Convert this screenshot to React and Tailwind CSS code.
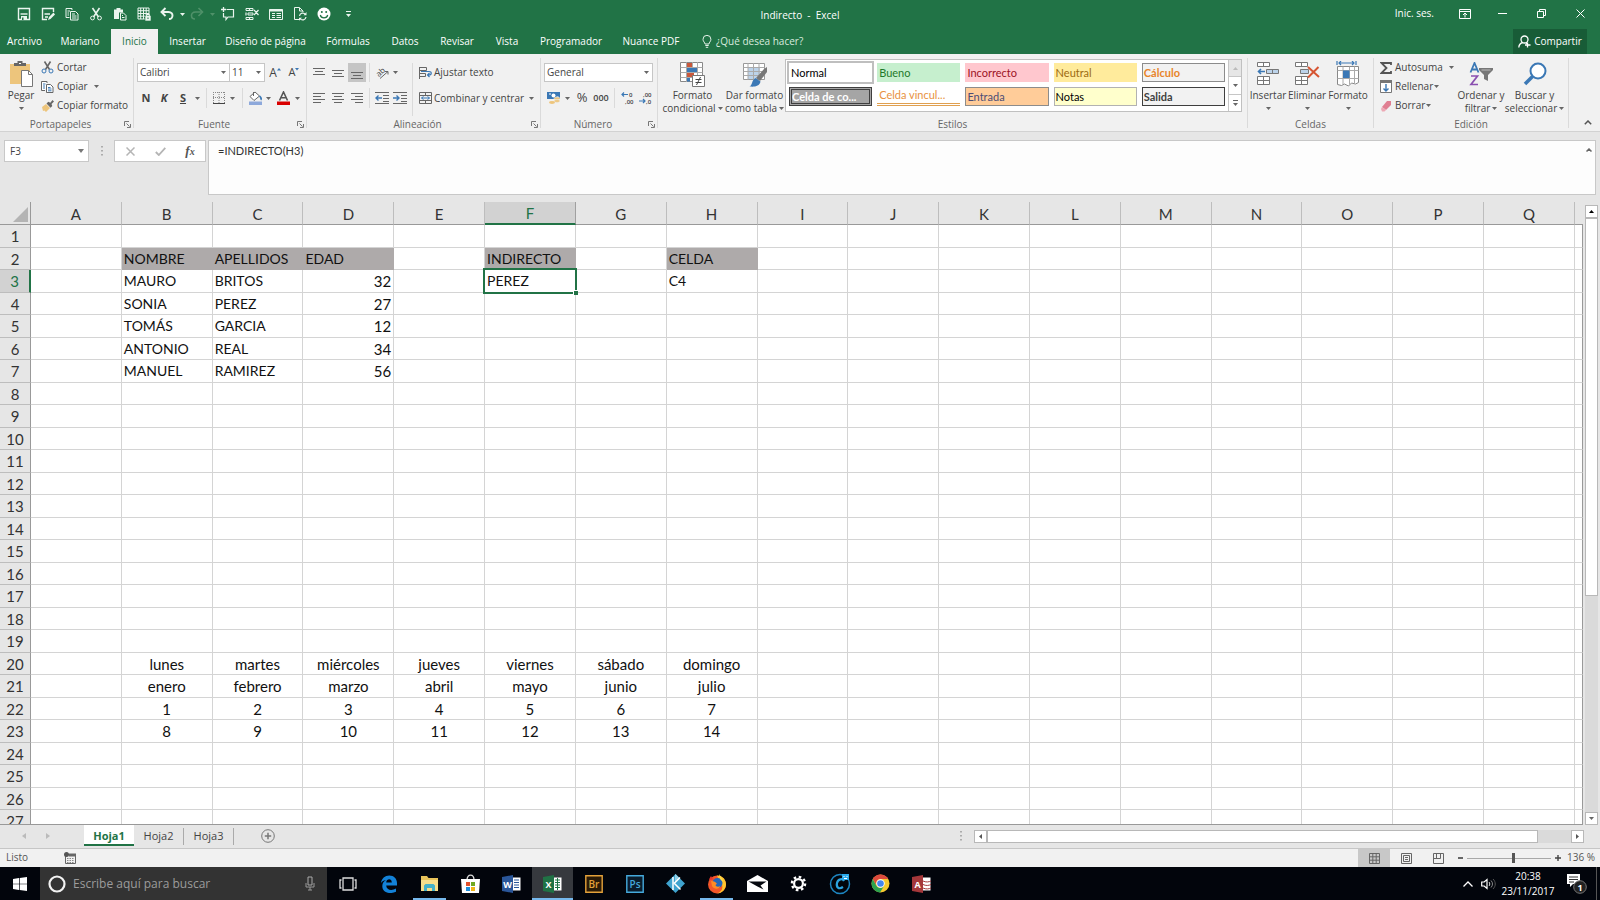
import React from "react";

const Svg = ({ w = 14, h = 14, children, className = "" }) => (
  <svg width={w} height={h} viewBox={`0 0 ${w} ${h}`} fill="none" aria-hidden="true" className={`shrink-0 ${className}`}>
    {children}
  </svg>
);

const Arrow = ({ className = "text-[#666]" }) => (
  <svg width="5" height="3" viewBox="0 0 5 3" aria-hidden="true" className={`shrink-0 ${className}`}>
    <path d="M0 0h5L2.500 3z" fill="currentColor" />
  </svg>
);

const Tool = ({ label, className, children }) => (
  <button type="button" aria-label={label} className={`flex shrink-0 items-center justify-center ${className}`}>
    {children}
  </button>
);

const VSep = ({ className = "" }) => <span className={`w-px shrink-0 self-stretch bg-[#dadada] ${className}`} />;

const Launcher = ({ label }) => (
  <button type="button" aria-label={label} className="flex h-4 w-3 items-center justify-center">
    <Svg w={7} h={7}>
      <path d="M.5 5V.5H5M2.500 2.500l3 3M6.500 3v3.500H3" stroke="#777" />
    </Svg>
  </button>
);

const Group = ({ label, launcher, className, children }) => (
  <section aria-label={label} className={`flex h-[70px] flex-col border-r border-[#dadada] ${className}`}>
    <div className="flex h-[58px]">{children}</div>
    <div className="flex h-3 items-start leading-4 text-[#666]">
      <span className="flex-1 text-center">{label}</span>
      {launcher && <Launcher label={`Opciones de ${label}`} />}
    </div>
  </section>
);

const BigButton = ({ icon, lines, className, arrow = "inline" }) => (
  <button type="button" className={`flex shrink-0 flex-col items-center pt-[2px] ${className}`}>
    <span className="flex h-[29px] items-center pb-px">{icon}</span>
    {lines.map((l, i) => (
      <span key={l} className="flex h-[13px] items-center gap-[2px] leading-[13px] whitespace-nowrap">
        {l}
        {arrow === "inline" && i === lines.length - 1 && <Arrow />}
      </span>
    ))}
    {arrow === "below" && (
      <span className="flex h-[13px] items-center">
        <Arrow />
      </span>
    )}
  </button>
);

const RowButton = ({ icon, text, arrowGap }) => (
  <button type="button" className="flex h-[19px] items-center whitespace-nowrap">
    <span className="mr-[3px] flex w-[13px] justify-center">{icon}</span>
    {text}
    {arrowGap && <Arrow className={`text-[#666] ${arrowGap}`} />}
  </button>
);

const Combo = ({ label, value, className }) => (
  <div className={`flex h-[19px] items-center border border-[#c6c6c6] bg-white pr-[3px] ${className}`}>
    <select aria-label={label} defaultValue={value} className="min-w-0 flex-1 appearance-none bg-transparent pl-[2px] outline-none">
      <option>{value}</option>
    </select>
    <Arrow />
  </div>
);

/* ---------- Quick access toolbar ---------- */

const W = "#eaf5ee";

const quick = [
  ["Guardar", "w-6", <Svg><path d="M1.500 1.500h11v11h-11z" stroke={W} strokeWidth="1.400" /><path d="M3.500 7h7" stroke={W} strokeWidth="1.400" /><path d="M4 9h6v4H4z" fill={W} /><path d="M5 10.500h1.500V13H5z" fill="#217346" /></Svg>],
  ["Guardar como", "w-6", <Svg><path d="M12.500 5V1.500h-11v11H6" stroke={W} strokeWidth="1.400" /><path d="M3.500 7H9M4 10h3" stroke={W} strokeWidth="1.400" /><path d="M7 13l1-3 4.500-4.500 1.500 2L9.500 12z" fill={W} /></Svg>],
  ["Copiar", "w-6", <Svg><path d="M7 3V1.500H1v9h3.500M5.500 4.500h5l2.500 2.500v6h-7.500z" stroke={W} /><path d="M2.500 4H5M2.500 6H4M2.500 8H4M7 7h3M7 9h4.500M7 11h4.500" stroke={W} /></Svg>],
  ["Cortar", "w-6", <Svg><path d="M3.500 1l6 9M10.500 1l-6 9" stroke={W} strokeWidth="1.600" /><circle cx="3.500" cy="11" r="1.900" stroke={W} /><circle cx="10.500" cy="11" r="1.900" stroke={W} /></Svg>],
  ["Pegar", "w-6", <Svg><path d="M1 2.500h2.500V1h4v1.500H10v3H6V12H1z" fill={W} /><path d="M7.500 6h3l2.500 2.500V13H7.500z" stroke={W} /><path d="M9 8.500h1M9 10.500h2.500" stroke={W} /></Svg>],
  ["Proteger hoja", "w-6", <Svg><path d="M1 1h11v11H1zM1 3.700h11M1 6.500h11M1 9.200h11M3.700 1v11M6.500 1v11M9.200 1v11" stroke={W} /><path d="M8 8.500h6V14H8z" fill={W} stroke="#217346" strokeWidth=".6" /><path d="M9.700 9V7.500h2.600V9" stroke={W} /><path d="M11 10.500v1.500" stroke="#217346" /></Svg>],
  ["Deshacer", "w-[22px]", <Svg><path d="M2 5h6.500c3 0 4 2 4 3.500s-1 3.500-3.500 3.500" stroke={W} strokeWidth="1.900" /><path d="M5.500 1L1.500 5l4 4" stroke={W} strokeWidth="1.900" /></Svg>],
  ["Opciones de deshacer", "w-2", <Arrow className="text-[#eaf5ee]" />],
  ["Rehacer", "w-[22px]", <Svg><path d="M12 5H5.500c-3 0-4 2-4 3.500S2.500 12 5 12" stroke="#4f9169" strokeWidth="1.600" /><path d="M8.500 1l4 4-4 4" stroke="#4f9169" strokeWidth="1.600" /></Svg>],
  ["Opciones de rehacer", "w-2", <Arrow className="text-[#4f9169]" />],
  ["Nuevo comentario", "w-6", <Svg><path d="M5.500 2.500h7v7.500H7l-2 2.500V10H2.500V6" stroke={W} strokeWidth="1.200" /><path d="M2.500 0v5M0 2.500h5" stroke={W} strokeWidth="1.300" /></Svg>],
  ["Eliminar filas", "w-6", <Svg><path d="M1 1.500h7v2H1zM3 6h5v2H3zM1 10.500h7v2H1z" stroke={W} /><path d="M4.500 1.500v2M4.500 10.500v2M1 5.500v3M9 3l4.500 5M13.500 3L9 8" stroke={W} strokeWidth="1.200" /></Svg>],
  ["Formulario", "w-6", <Svg><path d="M.5 2.500h13v10H.5z" stroke={W} /><path d="M.5 2.500h13v2H.5z" fill={W} /><path d="M3 6.500h3M3 8.500h3M3 10.500h3M7.500 6.500H12M7.500 8.500H12M7.500 10.500H12" stroke={W} /></Svg>],
  ["Actualizar", "w-6", <Svg><path d="M6 12.500H1.500v-12h5L10 4v1" stroke={W} /><path d="M6.500 1v3H10" stroke={W} /><path d="M6.500 9a3.300 3.300 0 016-1.500M13 10a3.300 3.300 0 01-6 1.500" stroke={W} strokeWidth="1.200" /><path d="M13.500 5v3.300h-3zM6 13.800v-3h3z" fill={W} /></Svg>],
  ["Emoticono", "w-6", <Svg><circle cx="7" cy="7" r="6.500" fill="#fff" /><circle cx="4.800" cy="5" r="1" fill="#217346" /><circle cx="9.200" cy="5" r="1" fill="#217346" /><path d="M3.300 8c.8 3.700 6.600 3.700 7.400 0" stroke="#217346" strokeWidth="1.200" /></Svg>],
  ["Personalizar barra", "w-6", <Svg w={5} h={6}><path d="M0 .5h5" stroke={W} /><path d="M0 3h5L2.500 6z" fill={W} /></Svg>],
];

const TitleBar = () => (
  <header className="grid h-[29px] grid-cols-[1fr_auto_1fr] items-center text-white">
    <div className="flex h-full items-center pb-px pl-3">
      {quick.map(([label, cls, icon]) => (
        <Tool key={label} label={label} className={`h-full ${cls}`}>{icon}</Tool>
      ))}
    </div>
    <h1 className="leading-[26px] whitespace-pre">Indirecto  -  Excel</h1>
    <div className="flex h-full items-center justify-end pb-[2px]">
      <button type="button" className="mr-3">Inic. ses.</button>
      <Tool label="Opciones de la cinta" className="w-[37px]">
        <Svg w={12} h={10}><path d="M.5.5h11v9H.5zM.5 2.500h11" stroke="#fff" /><path d="M6 8.500V4M4 6l2-2 2 2" stroke="#fff" /></Svg>
      </Tool>
      <Tool label="Minimizar" className="w-[39px]"><Svg w={9} h={2}><path d="M0 .5h9" stroke="#fff" /></Svg></Tool>
      <Tool label="Restaurar" className="w-[39px]"><Svg w={9} h={9}><path d="M.5 2.500h6v6h-6zM2.500 2.500v-2h6v6h-2" stroke="#fff" /></Svg></Tool>
      <Tool label="Cerrar" className="w-[39px]"><Svg w={9} h={9}><path d="M.5.5l8 8M8.500.5l-8 8" stroke="#fff" /></Svg></Tool>
    </div>
  </header>
);

const tabs = [
  ["Archivo", "w-[49px]"],
  ["Mariano", "w-[62px]"],
  ["Inicio", "w-[47px]"],
  ["Insertar", "w-[59px]"],
  ["Diseño de página", "w-[97px]"],
  ["Fórmulas", "w-[68px]"],
  ["Datos", "w-[46px]"],
  ["Revisar", "w-[58px]"],
  ["Vista", "w-[42px]"],
  ["Programador", "w-[86px]"],
  ["Nuance PDF", "w-[74px]"],
];

const TabBar = () => (
  <nav aria-label="Cinta de opciones" className="flex h-[25px] text-white">
    {tabs.map(([t, w]) => (
      <button key={t} type="button" className={`shrink-0 whitespace-nowrap ${w} ${t === "Inicio" ? "bg-[#f1f1f1] text-[#217346]" : ""}`}>{t}</button>
    ))}
    <button type="button" className="ml-[14px] flex items-center gap-1 whitespace-nowrap text-[#d9eadf]">
      <Svg w={10} h={13}><path d="M3 9C3 7.500 1 6.500 1 4.300a3.900 3.900 0 017.900 0C8.900 6.500 7 7.500 7 9zM3.300 10.500h3.400M3.800 12.300h2.400" stroke="#e5f1e9" /></Svg>
      ¿Qué desea hacer?
    </button>
    <button type="button" className="mr-[13px] ml-auto flex w-[74px] items-center justify-center gap-[3px] bg-[#185c37] whitespace-nowrap">
      <Svg w={13} h={13}><circle cx="6.500" cy="4.500" r="3.500" stroke="#fff" strokeWidth="1.300" /><path d="M.8 12.500c.2-3 2-4.500 4-5M8 8l1.500 1" stroke="#fff" strokeWidth="1.300" /><path d="M9.500 7.500v5M7 10h5.500" stroke="#fff" strokeWidth="1.300" /></Svg>
      Compartir
    </button>
  </nav>
);

/* ---------- Ribbon ---------- */

const G = "#666";
const B = "#3b78b5";

const Lines = ({ rows }) => (
  <Svg w={12} h={12}>
    {rows.map(([x, y, len]) => <path key={y} d={`M${x} ${y}.5h${len}`} stroke={G} />)}
  </Svg>
);

const styles = [
  ["Normal", "bg-white pl-[2px] text-black outline-2 outline-[#bfbfbf]"],
  ["Bueno", "bg-[#c6efce] pl-[2px] text-[#1f7a2b]"],
  ["Incorrecto", "bg-[#ffc7ce] pl-[2px] text-[#9c1225]"],
  ["Neutral", "bg-[#ffeb9c] pl-[2px] text-[#9c6a10]"],
  ["Cálculo", "border border-[#8c8c8c] bg-[#f2f2f2] pl-px font-bold text-[#e8842a]"],
  ["Celda de co...", "border-3 border-double border-[#3f3f3f] bg-[#a5a5a5] font-bold text-white"],
  ["Celda vincul...", "border-b-3 border-double border-[#e0a050] bg-white pl-[2px] text-[#e8923f]"],
  ["Entrada", "border border-[#8c8c8c] bg-[#ffcc99] pl-px text-[#4c4c76]"],
  ["Notas", "border border-[#b2b2b2] bg-[#ffffcc] pl-px text-black"],
  ["Salida", "border border-[#3f3f3f] bg-[#f2f2f2] pl-px font-bold text-[#3f3f3f]"],
];

const Ribbon = () => (
  <div className="flex h-[78px] border-b border-[#d2d2d2] bg-[#f1f1f1] pt-1 text-[#444]">
    <Group label="Portapapeles" launcher className="w-[134px] shrink-0">
      <BigButton
        className="ml-[5px] w-8"
        arrow="below"
        lines={["Pegar"]}
        icon={<Svg w={24} h={26}><path d="M1 3h20v20H1z" fill="#edc57c" /><path d="M5 5V2h3.500V0h5v2H17v3z" fill="#666" /><path d="M10 2h2v1h-2z" fill="#fff" /><path d="M12.500 9.500h7l4 4v12h-11z" fill="#fff" stroke="#777" /><path d="M19.500 9.500v4h4" stroke="#777" /></Svg>}
      />
      <div className="ml-1 flex flex-col items-start">
        <RowButton text="Cortar" icon={<Svg w={13} h={13}><path d="M3.500.5l5 8M9.500.5l-5 8" stroke={G} strokeWidth="1.600" /><circle cx="3" cy="10" r="2" stroke={B} /><circle cx="10" cy="10" r="2" stroke={B} /></Svg>} />
        <RowButton text="Copiar" arrowGap="ml-[6px]" icon={<Svg w={13} h={13}><path d="M6 3V1.500H.5v9H4M5.500 4.500h4l2.500 2.500v5.500H5.500z" fill="#fff" stroke={G} /><path d="M2 4h2.500M2 6h2M2 8h2M7 7.500h2.500M7 9h3.500M7 10.800h3.500" stroke={B} /></Svg>} />
        <RowButton text="Copiar formato" icon={<Svg w={13} h={13}><path d="M1 8l4-3 4 4-4 4-1.500-1.500L2 12z" fill="#edc57c" /><path d="M5.500 4.500l1.800-1.800 2 1L11.500 1 13 2.500 10.500 5l.8 2-1.800 1.800z" fill="#666" /></Svg>} />
      </div>
    </Group>

    <Group label="Fuente" launcher className="w-[173px] shrink-0">
      <div className="flex flex-col pt-[5px] pl-[3px]">
        <div className="flex h-[19px] items-center">
          <Combo label="Fuente" value="Calibri" className="w-[93px]" />
          <Combo label="Tamaño de fuente" value="11" className="w-[35px] border-l-0" />
          <Tool label="Aumentar tamaño" className="w-[20px]"><span className="text-xs">A</span><Svg w={4} h={10}><path d="M0 2.500L2 0l2 2.500z" fill={B} /></Svg></Tool>
          <Tool label="Reducir tamaño" className="w-[18px]"><span className="text-[11px]">A</span><Svg w={4} h={10}><path d="M0 0h4L2 2.500z" fill={B} /></Svg></Tool>
        </div>
        <div className="mt-[6px] flex h-[20px] items-center">
          <Tool label="Negrita" className="w-[18px]"><b className="text-[11px]">N</b></Tool>
          <Tool label="Cursiva" className="w-[18px]"><b className="text-[11px] italic">K</b></Tool>
          <Tool label="Subrayado" className="w-[20px]"><b className="text-[11px] underline">S</b></Tool>
          <Tool label="Tipos de subrayado" className="w-[9px]"><Arrow /></Tool>
          <VSep className="mx-1" />
          <Tool label="Bordes" className="w-4"><Svg w={12} h={12}><path d="M.5 0v11M6 0v11M11.500 0v11M0 .5h12M0 5.500h12" stroke="#888" strokeDasharray="1 1" /><path d="M0 11.500h12" stroke="#444" /></Svg></Tool>
          <Tool label="Más bordes" className="w-[11px]"><Arrow /></Tool>
          <VSep className="mx-1" />
          <Tool label="Color de relleno" className="w-4"><Svg w={15} h={14}><path d="M5.500 1v4M2 5.500L7 1l4.500 4L6 9.500z" fill="#fff" stroke={G} /><path d="M12 4.500c2.500 2 2.500 4 1.200 5-1.200-.5-.5-2.500-2.200-4z" fill={B} /><path d="M1 10.500h13V14H1z" fill="#8ea9db" /></Svg></Tool>
          <Tool label="Más colores de relleno" className="w-[10px]"><Arrow /></Tool>
          <Tool label="Color de fuente" className="w-5"><Svg w={13} h={14}><path d="M2.500 9.500L6.500 1l4 8.500M4 6.800h5" stroke="#555" strokeWidth="1.600" /><path d="M0 10.500h13V14H0z" fill="#d90000" /></Svg></Tool>
          <Tool label="Más colores de fuente" className="w-[9px]"><Arrow /></Tool>
        </div>
      </div>
    </Group>

    <Group label="Alineación" launcher className="w-[234px] shrink-0">
      <div className="flex flex-col gap-[6px] pt-[5px] pl-[3px]">
        <div className="flex h-[19px] items-center gap-px">
          <Tool label="Alinear arriba" className="h-full w-[18px]"><Lines rows={[[0, 1, 12], [2, 4, 8], [0, 7, 12]]} /></Tool>
          <Tool label="Alinear al medio" className="h-full w-[18px]"><Lines rows={[[0, 3, 12], [2, 6, 8], [0, 9, 12]]} /></Tool>
          <Tool label="Alinear abajo" className="h-full w-[18px] bg-[#c5c5c5]"><Lines rows={[[0, 5, 12], [2, 8, 8], [0, 11, 12]]} /></Tool>
          <VSep className="ml-[2px]" />
          <Tool label="Orientación" className="ml-[3px] w-4"><Svg w={16} h={18}><text x="2" y="12" fontSize="8" fill="#444" transform="rotate(-40 5 9)">ab</text><path d="M6 14.500l8-7M11 7.500h3v3" stroke="#666" /></Svg></Tool>
          <Tool label="Más orientaciones" className="w-2"><Arrow /></Tool>
        </div>
        <div className="flex h-5 items-center gap-px">
          <Tool label="Alinear a la izquierda" className="w-[18px]"><Lines rows={[[0, 1, 12], [0, 4, 8], [0, 7, 12], [0, 10, 8]]} /></Tool>
          <Tool label="Centrar" className="w-[18px]"><Lines rows={[[0, 1, 12], [2, 4, 8], [0, 7, 12], [2, 10, 8]]} /></Tool>
          <Tool label="Alinear a la derecha" className="w-[18px]"><Lines rows={[[0, 1, 12], [4, 4, 8], [0, 7, 12], [4, 10, 8]]} /></Tool>
          <VSep className="ml-[2px]" />
          <Tool label="Disminuir sangría" className="ml-[3px] w-4"><Svg w={14} h={12}><path d="M0 .5h14M8 3.500h6M8 6.500h6M8 9.500h6M0 11.500h14" stroke={G} /><path d="M7 6H1M3.500 3.500L1 6l2.500 2.500" stroke={B} strokeWidth="1.400" /></Svg></Tool>
          <Tool label="Aumentar sangría" className="w-[18px]"><Svg w={14} h={12}><path d="M0 .5h14M8 3.500h6M8 6.500h6M8 9.500h6M0 11.500h14" stroke={G} /><path d="M0 6h6M3.500 3.500L6 6 3.500 8.500" stroke={B} strokeWidth="1.400" /></Svg></Tool>
        </div>
      </div>
      <VSep className="mt-[5px] ml-[3px]" />
      <div className="flex flex-col gap-[6px] pt-[5px] pl-[6px]">
        <button type="button" className="flex h-[19px] items-center gap-px whitespace-nowrap">
          <Svg><path d="M.5 1v12M.5 1.500h7v3h-7M.5 7.500h6v3h-6" stroke={G} /><path d="M2 5.500h8c3 0 3 3.500 0 3.500H9M10.500 7L8.500 9l2 2" stroke={B} strokeWidth="1.200" /></Svg>
          Ajustar texto
        </button>
        <button type="button" className="flex h-5 items-center gap-px whitespace-nowrap">
          <Svg><path d="M.5 1.500h12v11H.5zM.5 4.500h12M.5 9.500h12M6.500 1.500v3M6.500 9.500v3" stroke={G} /><path d="M2.500 7h8M4.500 5.500L2.500 7l2 1.500M8.500 5.500l2 1.500-2 1.500" stroke={B} /></Svg>
          Combinar y centrar
          <Arrow className="ml-1 text-[#666]" />
        </button>
      </div>
    </Group>

    <Group label="Número" launcher className="w-[117px] shrink-0">
      <div className="flex flex-col gap-[6px] pt-[5px] pl-[3px]">
        <Combo label="Formato de número" value="General" className="w-[109px]" />
        <div className="flex h-5 items-center">
          <Tool label="Formato de moneda" className="ml-px w-[18px]"><Svg><path d="M0 1h13v7H0z" fill={B} /><path d="M2 2.500h2v1H2zM9.500 5.500h2v1h-2z" fill="#fff" /><circle cx="6.500" cy="4.500" r="2" fill="#fff" /><ellipse cx="10" cy="7.500" rx="3" ry="1.400" fill="#edc57c" stroke="#f1f1f1" strokeWidth=".5" /><ellipse cx="10" cy="10" rx="3" ry="1.400" fill="#edc57c" stroke="#f1f1f1" strokeWidth=".5" /><ellipse cx="5" cy="11.500" rx="3" ry="1.400" fill="#edc57c" /></Svg></Tool>
          <Tool label="Más monedas" className="w-[9px]"><Arrow /></Tool>
          <Tool label="Estilo porcentual" className="w-5 text-[13px]">%</Tool>
          <Tool label="Estilo millares" className="w-[18px] text-[9px] font-semibold">000</Tool>
          <VSep className="mx-1" />
          <Tool label="Aumentar decimales" className="w-[17px]"><Svg w={14} h={18}><text x="8" y="8" fontSize="6" fontWeight="600" fill="#444">0</text><text x="4" y="15" fontSize="6" fontWeight="600" fill="#444">,00</text><path d="M7 5.500H1M3 3.500l-2 2 2 2" stroke={B} strokeWidth="1.200" /></Svg></Tool>
          <Tool label="Disminuir decimales" className="w-[19px]"><Svg w={14} h={18}><text x="4" y="8" fontSize="6" fontWeight="600" fill="#444">,00</text><text x="7" y="15" fontSize="6" fontWeight="600" fill="#444">,0</text><path d="M0 12h6M4 10l2 2-2 2" stroke={B} strokeWidth="1.200" /></Svg></Tool>
        </div>
      </div>
    </Group>

    <Group label="Estilos" className="min-w-0 flex-1">
      <BigButton
        className="ml-px w-[67px]"
        lines={["Formato", "condicional"]}
        icon={<Svg w={25} h={26}><path d="M.5 1.500h22v19H.5z" fill="#fff" stroke="#888" /><path d="M.5 6.500h22M.5 11.500h22M.5 16.500h22M6.500 1v20M17.500 1v20M12.500 1v20" stroke="#aaa" /><path d="M7 2h5v4H7zM7 12h7v4H7z" fill="#c9583c" /><path d="M7 7h10v4H7zM7 17h3v3.500H7z" fill={B} /><path d="M12.500 14.500h12v11h-12z" fill="#fff" stroke="#777" /><path d="M15.500 18.500h6M15.500 21.500h6M20.500 16l-4 8" stroke="#444" /></Svg>}
      />
      <BigButton
        className="w-[57px]"
        lines={["Dar formato", "como tabla"]}
        icon={<Svg w={26} h={26}><path d="M1.500 2.500h21v16h-21z" fill="#fff" stroke="#999" /><path d="M6 7h12v11H6z" fill="#bcd3ea" /><path d="M1.500 6.500h21M1.500 10.500h21M1.500 14.500h21M6 2v17M11.500 2v17M17 2v17" stroke="#aaa" /><path d="M25 6v5l-7 9-4-3 8-9z" fill="#777" /><path d="M13.500 17l5 3.500c-1 5-6 5.500-11 5 3-1 2-6.500 6-8.500z" fill={B} /></Svg>}
      />
      <div className="mt-px mr-[5px] ml-[2px] flex h-[53px] min-w-0 flex-1 border border-[#c0c0c0] bg-white">
        <div className="grid flex-1 grid-cols-5 grid-rows-2 gap-[5px] px-[3px] pt-[3px] pb-[5px] font-[Lato,sans-serif] text-[11px]">
          {styles.map(([name, cls]) => (
            <button key={name} type="button" className={`flex min-w-0 items-center overflow-hidden leading-3 whitespace-nowrap ${cls}`}>{name}</button>
          ))}
        </div>
        <div className="flex w-[13px] flex-col border-l border-[#c6c6c6]">
          <Tool label="Estilos anteriores" className="flex-1 bg-[#e6e6e6]"><Arrow className="rotate-180 text-[#bbb]" /></Tool>
          <Tool label="Estilos siguientes" className="flex-1 border-y border-[#c6c6c6]"><Arrow /></Tool>
          <Tool label="Más estilos" className="flex-1"><Svg w={5} h={6}><path d="M0 .5h5" stroke={G} /><path d="M0 3h5L2.500 6z" fill={G} /></Svg></Tool>
        </div>
      </div>
    </Group>

    <Group label="Celdas" className="w-[126px] shrink-0">
      <BigButton className="ml-px w-[38px]" arrow="below" lines={["Insertar"]} icon={<Svg w={22} h={24}><path d="M.5.5h12v4H.5zM6.500.5v4M.5 14.500h12v8H.5zM6.500 14.500v8M.5 18.500h12" fill="#fff" stroke="#777" /><path d="M9.500 7.500h12v4h-12zM15.500 7.500v4" fill="#bcd3ea" stroke="#777" /><path d="M8 9.500H2M4 7L1.500 9.500 4 12" stroke={B} strokeWidth="1.600" /></Svg>} />
      <BigButton className="w-[40px]" arrow="below" lines={["Eliminar"]} icon={<Svg w={25} h={24}><path d="M.5.5h12v4H.5zM6.500.5v4M.5 14.500h12v8H.5zM6.500 14.500v8M.5 18.500h12" fill="#fff" stroke="#777" /><path d="M5.500 7.500h8v4h-8z" fill="#bcd3ea" stroke="#777" /><path d="M13 5l11 10M23.500 5L13 15.500" stroke="#d65532" strokeWidth="2" /></Svg>} />
      <BigButton className="w-[42px]" arrow="below" lines={["Formato"]} icon={<Svg w={24} h={26}><path d="M1 0v4M20 0v4M3 2h15M5 0L3 2l2 2M16 0l2 2-2 2" stroke={B} strokeWidth="1.200" /><path d="M1.500 5.500h21v16l-3 1.500-4-1-3 3-4-2-3 1.500-4-1z" fill="#fff" stroke="#888" /><path d="M1.500 9.500h21M1.500 17.500h21M7 5.500v18M13.500 5.500v18M18.500 5.500v17" stroke="#aaa" /><path d="M7 9.500h6.500V17H7z" fill={B} /></Svg>} />
    </Group>

    <Group label="Edición" className="w-[195px] shrink-0">
      <div className="ml-[5px] flex w-[78px] flex-col items-start">
        <RowButton text="Autosuma" arrowGap="ml-[6px]" icon={<Svg w={12} h={12}><path d="M11 3V1H1.500l5 5-5 5H11V9" stroke="#555" strokeWidth="1.800" /></Svg>} />
        <RowButton text="Rellenar" arrowGap="ml-px" icon={<Svg w={12} h={13}><path d="M.5 1.500h11v11H.5z" fill="#fff" stroke="#777" /><path d="M0 0h12v3H0z" fill="#777" /><path d="M6 4v7M3.500 8.500L6 11l2.500-2.500" stroke={B} strokeWidth="1.400" /></Svg>} />
        <RowButton text="Borrar" arrowGap="ml-px" icon={<Svg w={12} h={12}><path d="M7 1h4v4L6 10 2 7z" fill="#e07f92" /><path d="M2 7l4 3-1.500 1.500H2L1 9z" fill="#eda9b5" /></Svg>} />
      </div>
      <BigButton className="w-[48px]" lines={["Ordenar y", "filtrar"]} icon={<Svg w={24} h={25}><path d="M1.500 10.500L5.500 1l4 9.500M3 7.500h5" stroke={B} strokeWidth="1.800" /><path d="M2 14h6.500L2 22.500h7" stroke="#8a4fb0" strokeWidth="1.700" /><path d="M10 6h14v2l-5 5v6l-4-2v-4l-5-5z" fill="#777" /><path d="M12.500 8h9" stroke="#bbb" /></Svg>} />
      <BigButton className="w-[59px]" lines={["Buscar y", "seleccionar"]} icon={<Svg w={24} h={25}><circle cx="15" cy="9" r="7.500" fill="#fff" stroke={B} strokeWidth="2" /><path d="M9.500 14.500L2 22" stroke={B} strokeWidth="3.500" /></Svg>} />
    </Group>
    <div className="flex flex-1 grow-0 basis-[31px] items-end justify-center pb-[3px] pl-[7px]">
      <Tool label="Contraer cinta" className="h-3 w-3"><Svg w={8} h={5}><path d="M.8 4.200L4 1l3.200 3.200" stroke="#555" strokeWidth="1.500" /></Svg></Tool>
    </div>
  </div>
);

const Dots = () => (
  <Svg w={2} h={10}><path d="M1 0v10" stroke="#999" strokeWidth="1.500" strokeDasharray="1.500 2.500" /></Svg>
);

const FormulaBar = () => (
  <div className="flex h-[70px] items-start pt-2 pr-1 pl-1">
    <div className="flex h-[22px] w-[85px] items-center border border-[#c8c8c8] bg-white pr-1">
      <input aria-label="Cuadro de nombres" defaultValue="F3" className="w-0 min-w-0 flex-1 bg-transparent pl-[5px] text-[#444] outline-none" />
      <Svg w={6} h={4}><path d="M0 0h6L3 4z" fill="#777" /></Svg>
    </div>
    <div className="flex h-[22px] w-[25px] items-center justify-center"><Dots /></div>
    <div className="flex h-[22px] w-[92px] items-center border border-[#c8c8c8] bg-white">
      <Tool label="Cancelar" className="w-[30px]"><Svg w={9} h={9}><path d="M.5.5l8 8M8.500.5l-8 8" stroke="#b5b5b5" strokeWidth="1.500" /></Svg></Tool>
      <Tool label="Introducir" className="w-[30px]"><Svg w={11} h={9}><path d="M.8 5l3 3L10.300.8" stroke="#b5b5b5" strokeWidth="1.800" /></Svg></Tool>
      <Tool label="Insertar función" className="w-[30px] font-['Liberation_Serif',serif] text-[13px] font-bold text-[#555] italic">f<span className="text-[10px]">x</span></Tool>
    </div>
    <div className="ml-[2px] flex h-[55px] flex-1 border border-[#c8c8c8] bg-[#fdfdfd]">
      <textarea aria-label="Barra de fórmulas" defaultValue="=INDIRECTO(H3)" className="flex-1 resize-none bg-transparent pt-[2px] pl-[9px] font-[Lato,sans-serif] text-[11px] leading-4 text-[#333] outline-none" />
      <Tool label="Contraer barra de fórmulas" className="h-[18px] w-[13px]"><Svg w={6} h={4}><path d="M.5 3.500L3 1l2.500 2.500" stroke="#666" strokeWidth="1.500" /></Svg></Tool>
    </div>
  </div>
);

/* ---------- Sheet ---------- */

const columns = "ABCDEFGHIJKLMNOPQ".split("");
const rows = Array.from({ length: 27 }, (_, i) => i + 1);

const cells = {};
const put = (row, start, values, kind) =>
  values.forEach((v, i) => {
    cells[columns[columns.indexOf(start) + i] + row] = { v, kind };
  });
put(2, "B", ["NOMBRE", "APELLIDOS", "EDAD"], "head");
put(2, "F", ["INDIRECTO"], "head");
put(2, "H", ["CELDA"], "head");
[["MAURO", "BRITOS", 32], ["SONIA", "PEREZ", 27], ["TOMÁS", "GARCIA", 12], ["ANTONIO", "REAL", 34], ["MANUEL", "RAMIREZ", 56]].forEach(([a, b, c], i) => {
  put(3 + i, "B", [a, b], "text");
  put(3 + i, "D", [c], "num");
});
put(3, "F", ["PEREZ"], "text");
put(3, "H", ["C4"], "text");
put(20, "B", ["lunes", "martes", "miércoles", "jueves", "viernes", "sábado", "domingo"], "mid");
put(21, "B", ["enero", "febrero", "marzo", "abril", "mayo", "junio", "julio"], "mid");
put(22, "B", [1, 2, 3, 4, 5, 6, 7], "mid");
put(23, "B", [8, 9, 10, 11, 12, 13, 14], "mid");

const kinds = {
  head: "border-[#aeaaaa] bg-[#aeaaaa] pl-[2px] text-left text-sm leading-5",
  text: "border-[#d4d4d4] pl-[2px] text-left text-sm leading-5",
  num: "border-[#d4d4d4] pr-[2px] text-right",
  mid: "border-[#d4d4d4] text-center",
};

const Sheet = () => (
  <div className="flex min-h-0 flex-1">
    <div className="min-w-0 flex-1 overflow-hidden border-b border-[#999]">
      <table className="w-full table-fixed border-separate border-spacing-0 font-[Lato,sans-serif] text-[15px] leading-5 text-[#111]">
        <colgroup>
          <col className="w-[31px]" />
          {columns.map((c) => <col key={c} />)}
          <col className="w-[8px]" />
        </colgroup>
        <thead>
          <tr className="h-[23px] text-[#333]">
            <td className="border-r border-b border-[#999] p-0">
              <div className="flex justify-end pt-[2px] pr-[2px]"><Svg w={15} h={15}><path d="M15 0v15H0z" fill="#b4b4b4" /></Svg></div>
            </td>
            {columns.map((c) => (
              <th key={c} scope="col" className={`border-r p-0 pt-[2px] font-normal ${c === "F" ? "border-b-2 border-[#a0a0a0] border-b-[#217346] bg-[#d2d2d2] leading-[19px] text-[#217346]" : "border-b border-[#bdbdbd] border-b-[#999]"}`}>{c}</th>
            ))}
            <td className="border-b border-[#999] p-0" />
          </tr>
        </thead>
        <tbody>
          {rows.map((r) => (
            <tr key={r} className="odd:h-[23px] even:h-[22px]">
              <th scope="row" className={`border-b border-[#bdbdbd] p-0 font-normal ${r === 3 ? "border-r-2 border-r-[#217346] bg-[#d2d2d2] text-[#217346]" : "border-r border-r-[#999] text-[#333]"}`}>{r}</th>
              {columns.map((c) => {
                const cell = cells[c + r];
                const selected = c + r === "F3";
                return (
                  <td key={c} className={`border-r border-b p-0 whitespace-nowrap ${cell && cell.kind === "head" ? "" : "bg-white"} ${cell ? kinds[cell.kind] : "border-[#d4d4d4]"} ${selected ? "relative" : ""}`}>
                    {cell ? cell.v : null}
                    {selected && (
                      <span className="absolute -inset-[2px] border-2 border-[#217346]">
                        <span className="absolute -right-[3px] -bottom-[3px] size-[5px] border-t border-l border-white bg-[#217346]" />
                      </span>
                    )}
                  </td>
                );
              })}
              <td className="border-r border-b border-[#d4d4d4] border-r-[#999] bg-white p-0" />
            </tr>
          ))}
        </tbody>
      </table>
    </div>
    <div className="flex w-[17px] flex-col items-start pt-[3px] pl-[2px]">
      <div className="flex w-[13px] flex-1 flex-col bg-[#dadada]">
        <Tool label="Desplazar arriba" className="h-[13px] border border-[#b8b8b8] bg-white"><Arrow className="rotate-180" /></Tool>
        <div className="basis-[61%] border border-[#b8b8b8] bg-white" />
        <Tool label="Desplazar abajo" className="mt-auto h-[13px] border border-[#b8b8b8] bg-white"><Arrow /></Tool>
      </div>
    </div>
  </div>
);

const SheetTabs = () => (
  <div className="flex h-[23px] items-start text-[#444]">
    <div className="flex h-[22px] w-[84px] items-center">
      <Tool label="Hojas anteriores" className="ml-3 w-6"><Svg w={4} h={6}><path d="M4 0v6L0 3z" fill="#bbb" /></Svg></Tool>
      <Tool label="Hojas siguientes" className="w-6"><Svg w={4} h={6}><path d="M0 0v6l4-3z" fill="#bbb" /></Svg></Tool>
    </div>
    <button type="button" className="h-[21px] w-[50px] border-b-2 border-[#217346] bg-white pt-[3px] text-[11px] font-bold text-[#217346]">Hoja1</button>
    <button type="button" className="mt-[3px] h-[17px] w-[50px] border-r border-[#aaa] text-[11px]">Hoja2</button>
    <button type="button" className="mt-[3px] h-[17px] w-[50px] border-r border-[#aaa] text-[11px]">Hoja3</button>
    <Tool label="Hoja nueva" className="ml-6 h-[22px] w-5"><Svg><circle cx="7" cy="7" r="6.300" stroke="#777" /><path d="M7 3.800v6.400M3.800 7h6.400" stroke="#777" strokeWidth="1.500" /></Svg></Tool>
    <div className="ml-auto flex h-[22px] items-center pr-3"><Dots /></div>
    <div className="mt-[5px] mr-4 flex h-[13px] w-[610px] bg-[#dadada]">
      <Tool label="Desplazar a la izquierda" className="w-[13px] border border-[#b8b8b8] bg-white"><Svg w={3} h={5}><path d="M3 0v5L0 2.500z" fill="#555" /></Svg></Tool>
      <div className="w-[551px] border border-[#b8b8b8] bg-white" />
      <Tool label="Desplazar a la derecha" className="ml-auto w-[13px] border border-[#b8b8b8] bg-white"><Svg w={3} h={5}><path d="M0 0v5l3-2.500z" fill="#555" /></Svg></Tool>
    </div>
  </div>
);

const StatusBar = () => (
  <footer className="flex h-[19px] items-stretch border-t border-[#c6c6c6] bg-[#f1f1f1] text-[#555]">
    <span className="w-[58px] pl-[6px] leading-[17px]">Listo</span>
    <Tool label="Grabar macro" className="w-6"><Svg w={12} h={12}><path d="M1.500 2.500h10v9h-10z" stroke="#666" /><path d="M5 1.500h7v3H5z" fill="#666" /><path d="M3 6.500h7M3 8.500h7M3 10.500h7" stroke="#888" strokeDasharray="1.500 1" /><circle cx="2.500" cy="2.500" r="2.500" fill="#555" /></Svg></Tool>
    <div className="ml-auto flex">
      <Tool label="Normal" className="w-8 bg-[#c8c8c8]"><Svg w={11} h={11}><path d="M.5.5h10v10H.5zM.5 3.800h10M.5 7.200h10M3.800.5v10M7.200.5v10" stroke="#666" /></Svg></Tool>
      <Tool label="Diseño de página" className="w-8"><Svg w={11} h={11}><path d="M.5.5h10v10H.5zM2.500 2.500h6v6h-6z" stroke="#666" /><path d="M4 4.500h3M4 6.500h3" stroke="#666" /></Svg></Tool>
      <Tool label="Vista previa de salto de página" className="w-8"><Svg w={11} h={11}><path d="M.5.5h10v10H.5zM3.500.5v5M7.500.5v5M.5 5.500h7" stroke="#666" /></Svg></Tool>
      <Tool label="Alejar" className="w-[13px]"><Svg w={5} h={2}><path d="M0 1h5" stroke="#444" strokeWidth="1.600" /></Svg></Tool>
      <input
        type="range"
        aria-label="Zoom"
        min="0"
        max="100"
        defaultValue="56"
        className="h-full w-[84px] appearance-none bg-[linear-gradient(#a8a8a8,#a8a8a8)] bg-[length:100%_1px] bg-center bg-no-repeat [&::-webkit-slider-thumb]:h-[10px] [&::-webkit-slider-thumb]:w-[3px] [&::-webkit-slider-thumb]:appearance-none [&::-webkit-slider-thumb]:bg-[#555]"
      />
      <Tool label="Acercar" className="w-[13px]"><Svg w={6} h={6}><path d="M0 3h6M3 0v6" stroke="#444" strokeWidth="1.400" /></Svg></Tool>
      <span className="w-9 pr-[5px] text-right leading-[17px] whitespace-nowrap">136 %</span>
    </div>
  </footer>
);

/* ---------- Taskbar ---------- */

const Office = ({ letter, color, children }) => (
  <Svg w={20} h={18}>
    <path d="M9 2.500h9.500v13H9z" fill="#fff" />
    {children}
    <path d="M0 2l11-2v18L0 16z" fill={color} />
    <text x="5.500" y="12.500" fontSize="9" fontWeight="700" textAnchor="middle" fill="#fff">{letter}</text>
  </Svg>
);

const Adobe = ({ text, color, bg }) => (
  <Svg w={18} h={18}>
    <path d="M.8.8h16.400v16.400H.8z" fill={bg} stroke={color} strokeWidth="1.400" />
    <text x="9" y="12.500" fontSize="10" fontWeight="600" textAnchor="middle" fill={color}>{text}</text>
  </Svg>
);

const apps = [
  ["Vista de tareas", "", <Svg w={18} h={14}><path d="M4 1h10v12H4zM2.500 3H1v8h1.500M15.500 3H17v8h-1.500" stroke="#ddd" strokeWidth="1.300" /></Svg>],
  ["Edge", "", <Svg w={18} h={18}><path d="M1 8C1.500 3.500 5 .5 9.300.5 14 .5 17 4 17 8v2.500H6.200c.3 5 6 5.300 9.800 3v3.300C10 19.500 2.300 18 2.300 11c0-3 1.700-5 3.700-6C3.500 5.300 2 6.500 1 8zm5.200-.5h5.600c0-4.600-5.300-4.100-5.600 0z" fill="#1382d8" /></Svg>],
  ["Explorador", "line", <Svg w={19} h={17}><path d="M1 1h6l1.500 2H18v13H1z" fill="#e8c35a" /><path d="M1 5h17v11H1z" fill="#f8dd8b" /><path d="M4 16v-5.500L5.500 9h8l1.500 1.500V16h-3v-3H7v3z" fill="#45b0c9" /></Svg>],
  ["Tienda", "", <Svg w={19} h={20}><path d="M6 6c0-6.500 7-6.500 7 0" stroke="#ddd" strokeWidth="1.300" /><path d="M0 5h19l-1 14H1z" fill="#fff" /><path d="M5 8h4v4H5z" fill="#e2502b" /><path d="M10 8h4v4h-4z" fill="#6fa822" /><path d="M5 13h4v4H5z" fill="#1c8edb" /><path d="M10 13h4v4h-4z" fill="#efb51a" /></Svg>],
  ["Word", "", <Office letter="W" color="#2a5699"><path d="M12 5h5M12 7.500h5M12 10h5M12 12.500h5" stroke="#2a5699" /></Office>],
  ["Excel", "active", <Office letter="X" color="#207245"><path d="M12 5h5M12 7.500h5M12 10h5M12 12.500h5M14.500 3v12" stroke="#207245" /></Office>],
  ["Bridge", "", <Adobe text="Br" color="#e3a13a" bg="#2a1a06" />],
  ["Photoshop", "", <Adobe text="Ps" color="#45a9dc" bg="#0a1c2c" />],
  ["Kodi", "", <Svg w={19} h={19}><path d="M9.500 0L19 9.500 9.500 19 0 9.500z" fill="#3fa3cf" /><path d="M9.500 0L14 4.500 9 9.500V.5z" fill="#8fd0e8" /><path d="M7 3v13M8 9.500l6-6M8.500 9.500l6 6" stroke="#fff" strokeWidth="1.500" /></Svg>],
  ["Firefox", "line", <Svg w={20} h={20}><circle cx="10" cy="10.500" r="9" fill="#f2562a" /><path d="M10 1.500c6 0 9 4.500 9 9s-4 9-9 9c5-2 6-5 5-9s-3-4-5-9z" fill="#ffc52e" /><path d="M2 6C3 3 4 2 4 2l1.500 2.500L9 5z" fill="#e8342d" /><circle cx="10.500" cy="9" r="5" fill="#2466b8" /><path d="M4 7c3 0 5 1 6 3-1 0-2 1-1 2s3 1 4 0c0 3-6 4-8 0z" fill="#ff8b24" /><path d="M12 0c2 3 4 4 4 8l-3-3z" fill="#ffd84a" /></Svg>],
  ["Correo", "", <Svg w={21} h={17}><path d="M0 6L10.500 0 21 6v11H0z" fill="#fff" /><path d="M1.500 6.500h18l-6 4 3 4-6-3z" fill="#05080f" /></Svg>],
  ["Configuración", "", <Svg w={17} h={17}><circle cx="8.500" cy="8.500" r="4.400" stroke="#fff" strokeWidth="2.200" /><circle cx="8.500" cy="8.500" r="6.600" stroke="#fff" strokeWidth="2.400" strokeDasharray="2.600 2.584" /></Svg>],
  ["CCleaner", "", <Svg w={22} h={22}><circle cx="11" cy="11" r="9.500" stroke="#1d86c2" strokeWidth="1.500" /><path d="M15 8c-1.500-3-6-2-7 2s1.500 7 6 4" stroke="#2ba3e0" strokeWidth="2.200" /><path d="M13 1h7v6h-7z" fill="#2aa9ea" /><path d="M15 3v1M18 3v1M15 5.500h3" stroke="#fff" /></Svg>],
  ["Chrome", "", <Svg w={19} h={19}><circle cx="9.500" cy="9.500" r="9" fill="#f7c92f" /><path d="M1.700 5A9 9 0 0117.300 5H9.500a4.500 4.500 0 00-4 6.500z" fill="#dc4a3d" /><path d="M1.700 5A9 9 0 009 18.500l4-6.500a4.500 4.500 0 01-7.500 0z" fill="#2ba14f" /><circle cx="9.500" cy="9.500" r="4.200" fill="#fff" /><circle cx="9.500" cy="9.500" r="3.300" fill="#4586ee" /></Svg>],
  ["Access", "", <Office letter="A" color="#a4373a"><path d="M11 6c3 1.500 6 1 8 0M11 9.500c3 1.500 6 1 8 0M11 13c3 1.500 6 1 8 0" stroke="#a4373a" /></Office>],
];

const Taskbar = () => (
  <div className="flex h-[33px] shrink-0 items-stretch bg-[#02050c] text-white">
    <Tool label="Inicio de Windows" className="w-10"><Svg><path d="M0 2l6-1v5.700H0zM6.700.9L14 0v6.700H6.700zM0 7.300h6V13l-6-1zM6.700 7.300H14V14l-7.300-1z" fill="#fff" /></Svg></Tool>
    <label className="flex w-[287px] items-center bg-[#333]">
      <Svg w={18} h={18} className="ml-2"><circle cx="9" cy="9" r="7.500" stroke="#f2f2f2" strokeWidth="2.200" /></Svg>
      <input aria-label="Buscar" placeholder="Escribe aquí para buscar" className="ml-[7px] min-w-0 flex-1 bg-transparent text-xs outline-none placeholder:text-[#9c9c9c]" />
      <Svg w={10} h={15} className="mr-3"><path d="M3 1h4v8H3z" stroke="#aaa" /><path d="M1 7v4h8V7M5 11v3M3 14h4" stroke="#999" /></Svg>
    </label>
    {apps.map(([label, state, icon]) => (
      <button
        key={label}
        type="button"
        aria-label={label}
        className={`flex w-[41px] shrink-0 items-center justify-center ${state === "active" ? "bg-[#36393e]" : ""} ${state ? "relative" : ""}`}
      >
        {icon}
        {state && <span className={`absolute bottom-0 h-[2px] bg-[#76b9ed] ${state === "active" ? "inset-x-0" : "inset-x-1"}`} />}
      </button>
    ))}
    <div className="ml-auto flex items-center">
      <Tool label="Iconos ocultos" className="w-[18px]"><Svg w={10} h={6}><path d="M.5 5.500L5 1l4.500 4.500" stroke="#fff" strokeWidth="1.300" /></Svg></Tool>
      <Tool label="Volumen" className="w-[22px]"><Svg w={15} h={12}><path d="M.7 4h2.500L6 1.500v9L3.200 8H.7z" stroke="#fff" strokeWidth="1.200" /><path d="M8 4c1 1 1 3 0 4" stroke="#ddd" /><path d="M10 2.500c2 2 2 5 0 7" stroke="#888" /><path d="M12 1c3 3 3 7 0 10" stroke="#555" /></Svg></Tool>
      <div className="w-[58px] text-center leading-[15px]">
        <div>20:38</div>
        <div>23/11/2017</div>
      </div>
      <Tool label="Notificaciones" className="w-[39px]"><Svg w={21} h={21}><path d="M1 1h13v10H7l-3 3v-3H1z" fill="#fff" /><path d="M3 4h9M3 6.500h9M3 9h5" stroke="#333" /><circle cx="14" cy="14" r="6.300" fill="#222" stroke="#777" /><text x="14" y="17.500" fontSize="9" fontWeight="700" textAnchor="middle" fill="#fff">1</text></Svg></Tool>
      <span className="mr-[3px] h-[33px] w-px bg-[#555]" />
    </div>
  </div>
);

export default function App() {
  return (
    <div className="flex h-screen flex-col overflow-hidden bg-[#e6e6e6] font-['Open_Sans','Noto_Sans',sans-serif] text-[10px]">
      <div className="bg-[#217346]">
        <TitleBar />
        <TabBar />
      </div>
      <Ribbon />
      <FormulaBar />
      <Sheet />
      <SheetTabs />
      <StatusBar />
      <Taskbar />
    </div>
  );
}
